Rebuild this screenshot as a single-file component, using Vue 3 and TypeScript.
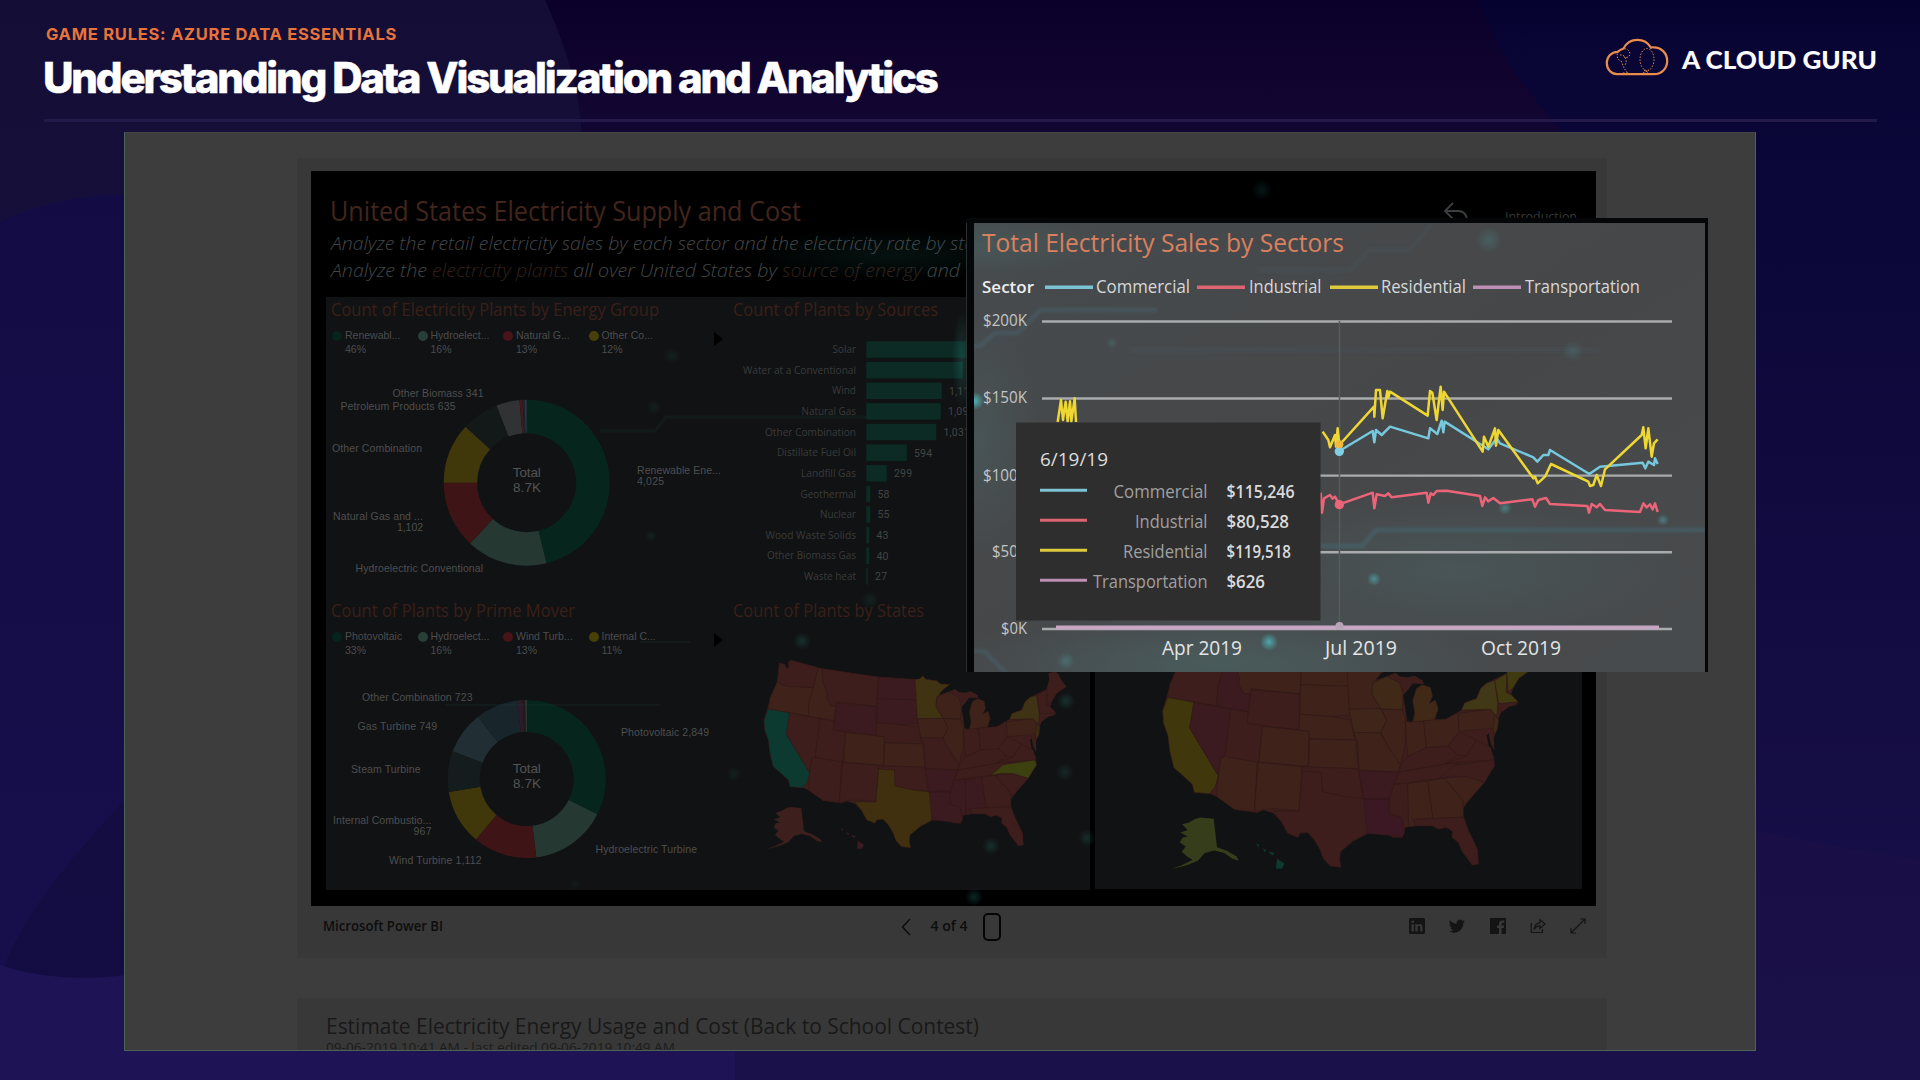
<script setup lang="ts">
type Anchor = 'start' | 'middle' | 'end'
interface Label { t: string; x: number; y: number; w: number; a?: Anchor }
interface Slice { from: number; to: number; fill: string }
interface LegendItem { name: string; pct: string; color: string }
interface State { id: string; d: string; count: string; price: string }

// Donut segment between two clockwise angles measured from 12 o'clock
function arc(cx: number, cy: number, R: number, r: number, s: Slice): string {
  const p = (rad: number, deg: number) => {
    const a = (deg * Math.PI) / 180
    return `${(cx + rad * Math.sin(a)).toFixed(2)},${(cy - rad * Math.cos(a)).toFixed(2)}`
  }
  const big = s.to - s.from > 180 ? 1 : 0
  return `M${p(R, s.from)}A${R},${R} 0 ${big} 1 ${p(R, s.to)}L${p(r, s.to)}A${r},${r} 0 ${big} 0 ${p(r, s.from)}Z`
}

const legendA: LegendItem[] = [
  { name: 'Renewabl...', pct: '46%', color: '#06241b' },
  { name: 'Hydroelect...', pct: '16%', color: '#283f38' },
  { name: 'Natural G...', pct: '13%', color: '#461419' },
  { name: 'Other Co...', pct: '12%', color: '#474008' },
]
const legendB: LegendItem[] = [
  { name: 'Photovoltaic', pct: '33%', color: '#06241b' },
  { name: 'Hydroelect...', pct: '16%', color: '#283f38' },
  { name: 'Wind Turb...', pct: '13%', color: '#461419' },
  { name: 'Internal C...', pct: '11%', color: '#474008' },
]

const donutA: Slice[] = [
  { from: 0, to: 166.2, fill: '#06261d' },
  { from: 166.2, to: 223, fill: '#263832' },
  { from: 223, to: 270, fill: '#3e1417' },
  { from: 270, to: 312.5, fill: '#40370b' },
  { from: 312.5, to: 338.6, fill: '#131819' },
  { from: 338.6, to: 355, fill: '#303233' },
  { from: 355, to: 357.2, fill: '#42191c' },
  { from: 357.2, to: 358.6, fill: '#1c2430' },
  { from: 358.6, to: 360, fill: '#28394a' },
]
const donutB: Slice[] = [
  { from: 0, to: 116.6, fill: '#06261d' },
  { from: 116.6, to: 173, fill: '#263832' },
  { from: 173, to: 220, fill: '#3e1417' },
  { from: 220, to: 260.5, fill: '#40370b' },
  { from: 260.5, to: 290.6, fill: '#151c1d' },
  { from: 290.6, to: 322, fill: '#212f35' },
  { from: 322, to: 353, fill: '#18252a' },
  { from: 353, to: 357, fill: '#2e1b2a' },
  { from: 357, to: 359, fill: '#231a1c' },
  { from: 359, to: 360, fill: '#35403f' },
]
const labelsA: Label[] = [
  { t: 'Other Biomass 341', x: 392.5, y: 397, w: 91 },
  { t: 'Petroleum Products 635', x: 340.5, y: 410, w: 115 },
  { t: 'Other Combination', x: 332, y: 452, w: 90 },
  { t: 'Renewable Ene...', x: 637, y: 474, w: 84 },
  { t: '4,025', x: 637, y: 485, w: 27 },
  { t: 'Natural Gas and ...', x: 333, y: 520, w: 90 },
  { t: '1,102', x: 397, y: 531, w: 26 },
  { t: 'Hydroelectric Conventional', x: 355.5, y: 572, w: 127.5 },
]
const labelsB: Label[] = [
  { t: 'Other Combination 723', x: 362, y: 701, w: 110.5 },
  { t: 'Gas Turbine 749', x: 357.5, y: 730, w: 79.5 },
  { t: 'Photovoltaic 2,849', x: 621, y: 736, w: 88 },
  { t: 'Steam Turbine', x: 351, y: 773, w: 69.5 },
  { t: 'Internal Combustio...', x: 333, y: 824, w: 98.5 },
  { t: '967', x: 413.5, y: 835, w: 18 },
  { t: 'Hydroelectric Turbine', x: 595.5, y: 853, w: 101.5 },
  { t: 'Wind Turbine 1,112', x: 389, y: 864, w: 92.5 },
]

const bars = [
  { n: 'Solar', v: '', w: 110, tw: 23.5 },
  { n: 'Water at a Conventional', v: '', w: 96.5, tw: 113 },
  { n: 'Wind', v: '1,115', w: 75.5, tw: 24 },
  { n: 'Natural Gas', v: '1,096', w: 74.5, tw: 54.5 },
  { n: 'Other Combination', v: '1,031', w: 70, tw: 91 },
  { n: 'Distillate Fuel Oil', v: '594', w: 40.5, tw: 79 },
  { n: 'Landfill Gas', v: '299', w: 20.5, tw: 55 },
  { n: 'Geothermal', v: '58', w: 4, tw: 55.5 },
  { n: 'Nuclear', v: '55', w: 4, tw: 36 },
  { n: 'Wood Waste Solids', v: '43', w: 3, tw: 90.5 },
  { n: 'Other Biomass Gas', v: '40', w: 3, tw: 89 },
  { n: 'Waste heat', v: '27', w: 1.6, tw: 52 },
]

const M = '#3b1b1f', R = '#3d1e1c', B = '#3f231b', O = '#402a17', Y = '#403315'
const outline =
  'M178,218L196,224L200,236L207,232L204,218L212,210L300,234L380,247L470,260L585,268L600,266L608,257L618,268L650,272L662,282L690,283L668,300L658,314L684,306L706,297L716,306L735,308L752,304L772,315L776,324L748,323L735,340L724,352L730,384L734,415L748,418L753,395L748,365L757,335L772,326L792,333L797,355L788,372L804,364L811,385L802,412L830,410L868,388L876,370L905,360L915,335L930,322L980,298L988,268L986,250L1005,245L1015,252L1025,272L1039,290L1010,310L998,330L990,350L1008,368L1003,376L985,380L965,395L955,420L957,434L948,455L949,488L940,470L935,445L930,450L936,480L948,502L950,524L925,565L890,605L872,630L872,645L885,682L908,730L910,765L895,768L870,735L860,712L845,700L846,685L830,676L812,680L796,672L755,672L730,676L722,700L700,700L690,695L640,690L600,710L570,735L568,756L572,773L545,770L528,752L520,730L505,705L490,688L470,690L465,700L440,690L425,662L405,641L380,633L365,640L310,632L265,600L248,593L210,590L205,570L178,545L160,530L150,490L145,450L134,420L132,390L145,345L150,325L172,275Z'

const states: State[] = [
  { id: 'WA', d: 'M178,218L196,224L200,236L207,232L204,218L212,210L296,233L280,293L210,290L188,286L172,275Z', count: R, price: M },
  { id: 'OR', d: 'M172,275L188,286L210,290L280,293L268,330L265,378L145,357L150,325Z', count: B, price: R },
  { id: 'CA', d: 'M145,357L209,369L199,432L269,548L262,575L248,593L210,590L205,570L178,545L160,530L150,490L145,450L134,420L132,390Z', count: '#0c3a30', price: '#40370d' },
  { id: 'NV', d: 'M209,369L300,386L285,502L276,505L268,548L199,432Z', count: R, price: M },
  { id: 'ID', d: 'M296,233L306,236L308,275L322,310L320,325L332,347L348,348L342,392L265,378L268,330L280,293Z', count: B, price: M },
  { id: 'MT', d: 'M306,236L380,247L475,261L470,348L350,336L348,348L332,347L320,325L322,310L308,275Z', count: R, price: B },
  { id: 'WY', d: 'M350,338L470,350L468,437L340,421Z', count: M, price: R },
  { id: 'UT', d: 'M300,386L342,392L340,421L378,426L368,517L285,504Z', count: R, price: R },
  { id: 'CO', d: 'M378,428L493,440L490,526L370,516Z', count: B, price: B },
  { id: 'AZ', d: 'M285,502L365,516L358,636L310,632L265,600L270,545L276,505Z', count: R, price: B },
  { id: 'NM', d: 'M368,516L476,527L468,634L398,629L380,633L358,637Z', count: R, price: B },
  { id: 'ND', d: 'M475,261L585,268L590,330L472,326Z', count: M, price: B },
  { id: 'SD', d: 'M472,326L590,330L592,400L545,404L470,398Z', count: M, price: B },
  { id: 'NE', d: 'M470,398L545,404L594,412L606,461L494,458L493,440L468,437Z', count: R, price: B },
  { id: 'KS', d: 'M494,459L608,462L614,532L492,527Z', count: B, price: B },
  { id: 'OK', d: 'M475,527L615,532L624,604L580,600L525,588L523,541L475,537Z', count: R, price: R },
  { id: 'TX', d: 'M476,537L523,541L525,588L580,600L628,606L637,652L636,690L600,710L570,735L568,756L572,773L545,770L528,752L520,730L505,705L490,688L470,690L465,700L440,690L425,662L405,636L468,636Z', count: '#40300f', price: R },
  { id: 'MN', d: 'M585,268L600,266L608,257L618,268L650,272L662,282L690,283L668,300L650,322L648,350L670,385L592,386Z', count: '#403312', price: B },
  { id: 'IA', d: 'M592,386L670,385L684,414L668,444L603,443Z', count: B, price: '#40261a' },
  { id: 'MO', d: 'M603,443L668,444L694,488L718,522L712,540L616,534L612,462Z', count: R, price: B },
  { id: 'AR', d: 'M615,536L712,540L692,604L628,606Z', count: M, price: '#3b1a20' },
  { id: 'LA', d: 'M628,606L690,606L690,642L720,650L728,688L722,700L690,695L636,690Z', count: M, price: '#3b1823' },
  { id: 'WI', d: 'M650,322L684,306L716,322L724,352L722,386L670,385L648,350Z', count: B, price: O },
  { id: 'IL', d: 'M672,386L722,388L730,410L730,470L718,522L694,488L670,444L684,414Z', count: B, price: B },
  { id: 'MI', d: 'M748,418L753,395L748,365L757,335L772,326L792,333L797,355L788,372L804,364L811,385L802,412Z', count: B, price: O },
  { id: 'IN', d: 'M730,418L775,415L782,480L736,502Z', count: R, price: B },
  { id: 'OH', d: 'M775,415L802,412L830,410L860,394L862,440L836,476L782,480Z', count: R, price: B },
  { id: 'KY', d: 'M718,522L736,502L782,480L836,476L858,498L830,520L716,540Z', count: R, price: R },
  { id: 'TN', d: 'M716,540L830,520L866,514L812,556L702,570Z', count: R, price: R },
  { id: 'MS', d: 'M702,570L736,568L738,674L726,676L720,650L690,642L692,604Z', count: M, price: R },
  { id: 'AL', d: 'M736,568L785,562L798,652L748,656L755,672L738,674Z', count: M, price: B },
  { id: 'GA', d: 'M785,562L826,555L872,610L873,650L798,654Z', count: R, price: B },
  { id: 'FL', d: 'M748,656L798,654L873,650L885,682L908,730L910,765L895,768L870,735L860,712L845,700L846,685L830,676L812,680L796,672L755,672Z', count: R, price: R },
  { id: 'SC', d: 'M826,555L880,551L925,565L890,605L874,620L872,610Z', count: R, price: B },
  { id: 'VA', d: 'M830,520L880,500L905,462L940,480L948,510L866,516Z', count: R, price: R },
  { id: 'NC', d: 'M812,556L850,524L945,510L950,524L925,565L880,551L845,550Z', count: '#3d400f', price: R },
  { id: 'WV', d: 'M836,476L862,440L905,462L880,500L858,498Z', count: R, price: R },
  { id: 'PA', d: 'M860,396L940,386L957,406L950,432L862,440Z', count: B, price: B },
  { id: 'NY', d: 'M868,388L876,370L905,360L915,335L930,322L950,316L958,372L955,404L940,386Z', count: Y, price: '#403816' },
  { id: 'NJ', d: 'M950,400L960,412L957,434L948,448L946,434Z', count: O, price: O },
  { id: 'VT', d: 'M950,316L980,298L978,345L990,350L1008,368L960,372Z', count: R, price: '#413a10' },
  { id: 'ME', d: 'M980,298L988,268L986,250L1005,245L1015,252L1025,272L1039,290L1010,310L998,330L984,345Z', count: R, price: '#403a10' },
]
const alaska =
  'M198,655L210,651L244,654L252,724L275,732L300,746L306,757L290,752L270,738L245,732L222,738L205,757L178,768L138,778L165,768L192,755L180,748L165,735L175,722L160,712L168,700L180,698L162,688L180,682L166,668L182,664Z'
const hawaii = 'M362,715L370,718L368,724ZM378,727L388,731L384,736ZM392,734L408,738L402,744ZM414,752L432,764L426,776L411,776Z'

// Sales series, in the plot's own 3x units
const residential =
  '68,665 85,690 90,712 105,675 108,710 113,655 118,705 222,590 223,620 228,540 240,540 248,625 262,543 265,562 270,545 383,617 390,543 397,548 410,630 422,530 428,600 432,545 548,725 552,680 565,710 585,655 588,707 595,660 700,805 705,800 713,820 735,800 753,762 865,815 870,828 880,825 890,795 903,828 915,778 1025,675 1030,652 1037,715 1045,655 1055,740 1062,700 1073,688'
const winter = '-727,636 -717,570 -711,630 -703,575 -697,634 -690,574 -686,634 -676,565 -672,636'
const commercial =
  '118,723 218,663 223,697 228,660 245,675 270,650 385,685 390,655 412,672 425,632 430,667 434,635 550,708 565,718 590,685 600,700 700,742 712,755 730,735 745,735 750,720 868,792 900,770 1028,758 1036,775 1045,755 1062,765 1065,745 1073,762'
const industrial =
  '62,848 66,908 72,865 90,855 98,866 105,860 118,883 218,848 223,895 230,853 255,858 265,850 275,862 380,848 385,878 392,850 400,855 410,843 440,842 540,858 547,888 555,862 565,874 580,864 600,880 697,868 705,890 715,870 738,864 750,882 862,888 867,908 875,882 890,892 900,882 915,900 1020,906 1030,880 1040,892 1050,883 1058,898 1065,880 1073,906'

const sectors = [
  { n: 'Commercial', c: '#7cc3d3', v: '$115,246', tw: 94, vw: 68, x: 1045, lx: 1096, lw: 94 },
  { n: 'Industrial', c: '#dd6571', v: '$80,528', tw: 72.5, vw: 62.5, x: 1197, lx: 1249, lw: 72.5 },
  { n: 'Residential', c: '#dfc93c', v: '$119,518', tw: 84.5, vw: 64.5, x: 1330, lx: 1381, lw: 85 },
  { n: 'Transportation', c: '#bd8fb4', v: '$626', tw: 114.5, vw: 38.5, x: 1473, lx: 1525, lw: 115 },
]
const gridY = [321.5, 398.5, 475.6, 552.3, 629]
const axis: Label[] = [
  { t: '$200K', x: 983, y: 326, w: 44 },
  { t: '$150K', x: 983, y: 403, w: 44 },
  { t: '$100K', x: 983, y: 480.5, w: 44 },
  { t: '$50K', x: 992, y: 557, w: 35 },
  { t: '$0K', x: 1001, y: 634, w: 26 },
]
const months: Label[] = [
  { t: 'Apr 2019', x: 1162, y: 655, w: 80 },
  { t: 'Jul 2019', x: 1325, y: 655, w: 72 },
  { t: 'Oct 2019', x: 1481, y: 655, w: 80 },
]
const sparks = [
  [802, 641, 6, 0.22], [1064, 632, 3, 0.1], [1066, 701, 6, 0.22], [1065, 772, 6, 0.16], [991, 846, 6, 0.22], [1087, 838, 6, 0.2],
  [734, 774, 5, 0.1], [974, 897, 6, 0.25], [651, 536, 4, 0.12], [575, 884, 4, 0.06], [672, 356, 6, 0.1], [654, 407, 5, 0.1], [870, 600, 6, 0.12], [1262, 190, 7, 0.15],
]
</script>

<template>
  <div class="slide">
    <svg class="backdrop" viewBox="0 0 1920 1080" aria-hidden="true">
      <defs>
        <linearGradient id="sky" x1="0" y1="0" x2="0" y2="1">
          <stop offset="0" stop-color="#0a0029" /><stop offset=".08" stop-color="#110530" />
          <stop offset=".3" stop-color="#150a3c" /><stop offset="1" stop-color="#1b114a" />
        </linearGradient>
        <linearGradient id="left" x1="0" y1="0" x2="0" y2="1">
          <stop offset="0" stop-color="#140e36" /><stop offset=".25" stop-color="#160f3b" /><stop offset="1" stop-color="#130c44" />
        </linearGradient>
        <linearGradient id="right" x1="0" y1="0" x2="0" y2="1080" gradientUnits="userSpaceOnUse">
          <stop offset="0" stop-color="#06022f" /><stop offset=".06" stop-color="#090535" /><stop offset=".2" stop-color="#0b0738" />
          <stop offset=".45" stop-color="#110a3f" /><stop offset=".8" stop-color="#160e46" />
        </linearGradient>
        <linearGradient id="low" x1="0" y1="0" x2="0" y2="1">
          <stop offset="0" stop-color="#130c44" /><stop offset="1" stop-color="#170f4c" />
        </linearGradient>
      </defs>
      <rect width="1920" height="1080" fill="url(#sky)" />
      <path d="M0,0H545C565,45 580,90 582,140V1080H0Z" fill="url(#left)" />
      <path d="M1478,0C1500,60 1530,95 1570,140C1620,190 1700,230 1750,250V830C1800,840 1850,850 1920,860V0Z" fill="url(#right)" />
      <path d="M0,222C40,202 80,196 124,194V800C80,850 30,900 0,975Z" fill="url(#low)" />
      <path d="M0,965C60,985 130,980 200,960H735V1080H0Z" fill="#1e1455" />
    </svg>

    <header class="top">
      <div class="titles">
        <p class="eyebrow">GAME RULES: AZURE DATA ESSENTIALS</p>
        <h1>Understanding Data Visualization and Analytics</h1>
      </div>
      <div class="brand">
        <svg width="64" height="38" viewBox="0 0 64 38" fill="none" stroke="#ea8d4c">
          <path d="M12,36.200H49C57,36.200 62.200,30 62.200,23C62.200,15 56,9.200 48.500,9.300C47,9.200 46.500,9.200 46,9.600C43,4.500 38,1.800 32.500,1.800C26,1.800 21,5.500 18.500,10.500C16.500,11 14,12.500 12.800,13.800C6,14 1.800,19 1.800,25C1.800,31.500 6.500,36.200 12,36.200Z" stroke-width="2.200" />
          <g stroke-width="1" stroke-dasharray="1.500 1.500">
            <ellipse cx="42" cy="21.500" rx="7" ry="11" />
            <path d="M14,13C10,18 13,22 17,24C18,29 20,32 23,35M17,12C20,9 25,12 25,16C24,20 21,20 19,19M15,17C20,16 23,23 20,27M38,35L44,32M39,32L44,35M18,35H24" />
          </g>
        </svg>
        <svg class="wordmark" width="196" height="30" viewBox="0 0 196 30"><text x="1" y="23.500" textLength="195" lengthAdjust="spacingAndGlyphs">A CLOUD GURU</text></svg>
      </div>
    </header>
    <div class="rule"></div>

    <main class="page">
      <section class="card">
        <div class="report">
          <div class="report-head">
            <svg width="1285" height="126" viewBox="311 171 1285 126">
              <text class="ttl" x="330" y="221" font-size="27.500" textLength="471" lengthAdjust="spacingAndGlyphs">United States Electricity Supply and Cost</text>
              <text class="sub" x="331" y="250" textLength="660" lengthAdjust="spacingAndGlyphs">Analyze the retail electricity sales by each sector and the electricity rate by state</text>
              <text class="sub" x="331" y="276.500" textLength="629" lengthAdjust="spacingAndGlyphs">Analyze the <tspan class="hl">electricity plants</tspan> all over United States by <tspan class="hl">source of energy</tspan> and</text>
              <path d="M1453,203L1445,211L1453,219M1445,211H1458C1463,211 1466,214 1467,219" fill="none" stroke="#3c4040" stroke-width="1.800" />
              <text class="intro" x="1505" y="221" textLength="72" lengthAdjust="spacingAndGlyphs">Introduction</text>
            </svg>
          </div>

          <div class="panels">
            <div class="panel wide">
              <div class="col">
                <div class="cell upper">
                  <svg class="head" width="390" height="26" viewBox="326 297 390 26"><text class="ttl dim" x="331" y="316" textLength="328" lengthAdjust="spacingAndGlyphs">Count of Electricity Plants by Energy Group</text></svg>
                  <ul class="legend">
                    <li v-for="l in legendA" :key="l.name"><i :style="{ background: l.color }"></i><span>{{ l.name }}<br />{{ l.pct }}</span></li>
                    <li class="next"></li>
                  </ul>
                  <svg width="400" height="236" viewBox="326 362 400 236">
                    <path v-for="s in donutA" :key="s.from" :d="arc(526.7, 482.7, 83, 49.5, s)" :fill="s.fill" />
                    <text v-for="l in labelsA" :key="l.t" class="lab" :x="l.x" :y="l.y" :textLength="l.w">{{ l.t }}</text>
                    <text class="mid" x="512.800" y="477" textLength="28">Total</text><text class="mid" x="513" y="492" textLength="28">8.7K</text>
                  </svg>
                </div>
                <div class="cell">
                  <svg class="head" width="390" height="26" viewBox="326 598 390 26"><text class="ttl dim" x="331" y="617" textLength="244" lengthAdjust="spacingAndGlyphs">Count of Plants by Prime Mover</text></svg>
                  <ul class="legend">
                    <li v-for="l in legendB" :key="l.name"><i :style="{ background: l.color }"></i><span>{{ l.name }}<br />{{ l.pct }}</span></li>
                    <li class="next"></li>
                  </ul>
                  <svg width="400" height="227" viewBox="326 663 400 227">
                    <path v-for="s in donutB" :key="s.from" :d="arc(526.7, 779, 79, 47, s)" :fill="s.fill" />
                    <text v-for="l in labelsB" :key="l.t" class="lab" :x="l.x" :y="l.y" :textLength="l.w">{{ l.t }}</text>
                    <text class="mid" x="512.800" y="773" textLength="28">Total</text><text class="mid" x="513" y="788" textLength="28">8.7K</text>
                  </svg>
                </div>
              </div>
              <div class="col">
                <div class="cell upper">
                  <svg class="head" width="364" height="26" viewBox="726 297 364 26"><text class="ttl dim" x="733" y="316" textLength="205" lengthAdjust="spacingAndGlyphs">Count of Plants by Sources</text></svg>
                  <svg width="364" height="275" viewBox="726 323 364 275">
                    <g v-for="(b, i) in bars" :key="b.n">
                      <text class="lab din" x="856" :y="353.2 + i * 20.62" text-anchor="end" :textLength="b.tw" lengthAdjust="spacingAndGlyphs">{{ b.n }}</text>
                      <rect x="866.300" :y="341.3 + i * 20.62" :width="b.w" height="16.500" fill="#0b2b24" />
                      <text class="lab val" :x="873.5 + b.w" :y="353.4 + i * 20.62">{{ b.v }}</text>
                    </g>
                  </svg>
                </div>
                <div class="cell">
                  <svg class="head" width="364" height="26" viewBox="726 598 364 26"><text class="ttl dim" x="733" y="617" textLength="191" lengthAdjust="spacingAndGlyphs">Count of Plants by States</text></svg>
                  <svg width="364" height="266" viewBox="726 624 364 266">
                    <g transform="translate(720 590) scale(.33333)" stroke="#2f1917" stroke-width="1.500">
                      <path :d="outline" fill="#3d1e1c" stroke="none" />
                      <path v-for="s in states" :key="s.id" :d="s.d" :fill="s.count" />
                      <path :d="alaska" fill="#3d1f1d" stroke="none" /><path :d="hawaii" fill="#3b1b22" stroke="none" />
                    </g>
                  </svg>
                </div>
              </div>
            </div>
            <div class="panel narrow">
              <svg width="487" height="592" viewBox="1095 297 487 592">
                <g transform="translate(1109 551.600) scale(.406 .4083)" stroke="#2f1917" stroke-width="1.500">
                  <path :d="outline" fill="#3d1e1c" stroke="none" />
                  <path v-for="s in states" :key="s.id" :d="s.d" :fill="s.price" />
                  <path :d="alaska" transform="translate(14 0)" fill="#363d1b" stroke="none" /><path :d="hawaii" fill="#0e3a33" stroke="none" />
                </g>
              </svg>
            </div>
          </div>

          <svg class="glow" viewBox="311 171 1285 735" aria-hidden="true">
            <defs><radialGradient id="sp"><stop offset="0" stop-color="#2c9a90" /><stop offset="1" stop-color="#2c9a90" stop-opacity="0" /></radialGradient></defs>
            <circle v-for="(s, i) in sparks" :key="i" :cx="s[0]" :cy="s[1]" :r="s[2] * 1.5" :opacity="s[3]" fill="url(#sp)" />
            <ellipse cx="890" cy="255" rx="150" ry="26" fill="url(#sp)" opacity=".12" />
            <ellipse cx="962" cy="360" rx="10" ry="50" fill="url(#sp)" opacity=".25" />
            <path d="M600,431H655L666,417H870" stroke="#1a3a3d" stroke-width="3" fill="none" opacity=".2" />
            <path d="M445,705H660M640,642H690" stroke="#1d3a3a" stroke-width="2" fill="none" opacity=".2" />
          </svg>
        </div>

        <footer class="bar">
          <svg class="ms" width="122" height="20" viewBox="0 0 122 20"><text x="1" y="14" textLength="120" lengthAdjust="spacingAndGlyphs">Microsoft Power BI</text></svg>
          <div class="pager">
            <svg width="10" height="18" viewBox="0 0 10 18"><path d="M9,1L1.500,9L9,17" fill="none" stroke="#0d0d0d" stroke-width="1.500" /></svg>
            <svg class="ms" width="38" height="20" viewBox="0 0 38 20"><text x="0.500" y="14" textLength="37" lengthAdjust="spacingAndGlyphs">4 of 4</text></svg>
            <span class="focus"></span>
          </div>
          <div class="share">
            <svg width="16" height="16" viewBox="0 0 16 16"><path fill-rule="evenodd" d="M1,0H15L16,1V15L15,16H1L0,15V1ZM2.500,6.200V13.500H4.800V6.200ZM3.600,2.500A1.300,1.300 0 1 0 3.700,5.100A1.300,1.300 0 1 0 3.600,2.500ZM6.300,6.200V13.500H8.600V9.500C8.700,7.600 11.200,7.500 11.200,9.500V13.500H13.500V9C13.500,5.800 10,5.200 8.600,7.200V6.200Z" fill="#141414" /></svg>
            <svg width="16" height="16" viewBox="0 0 24 24"><path d="M23.600,4.900c-.9.400-1.800.7-2.800.8 1-.6 1.800-1.600 2.200-2.700-1,.6-2,1-3.100,1.200A4.900,4.900 0 0 0 11.500,8.700C7.500,8.500 3.800,6.500 1.400,3.500c-1.300,2.200-.7,5.200 1.500,6.600-.8,0-1.600-.2-2.200-.6 0,2.300 1.600,4.400 3.900,4.900-.7.200-1.500.2-2.200.1.600,2 2.400,3.400 4.600,3.400A9.900,9.900 0 0 1 0,19.900c2.200,1.400 4.800,2.200 7.500,2.200 9.100,0 14.300-7.700 14-14.600 1-.7 1.800-1.600 2.100-2.600z" fill="#141414" /></svg>
            <svg width="16" height="16" viewBox="0 0 16 16"><path d="M0,0H16V16H11.600V10H13.800L14.200,7.500H11.600V6C11.600,5 12,4.700 13,4.700H14.300V2.400H12.200C10,2.400 9,3.800 9,5.700V7.500H7V10H9V16H0Z" fill="#141414" /></svg>
            <svg width="16" height="16" viewBox="0 0 16 16" fill="none" stroke="#141414" stroke-width="1.200"><path d="M1.200,5V14.500H12.500V11" /><path d="M4,11.500C4.500,7.500 6.500,5 10,4.800V1.500L15,6L10,10.500V7.800C7.500,7.700 5.500,9 4,11.500Z" /></svg>
            <svg width="16" height="16" viewBox="0 0 16 16" fill="none" stroke="#141414" stroke-width="1.200"><path d="M1,15L15,1M10,1H15V6M1,10V15H6" /></svg>
          </div>
        </footer>
      </section>

      <section class="card second">
        <svg width="1310" height="53" viewBox="297 998 1310 53">
          <text class="est" x="326" y="1033.500" textLength="653" lengthAdjust="spacingAndGlyphs">Estimate Electricity Energy Usage and Cost (Back to School Contest)</text>
          <text class="edited" x="326" y="1052" textLength="349" lengthAdjust="spacingAndGlyphs">09-06-2019 10:41 AM - last edited 09-06-2019 10:49 AM</text>
        </svg>
      </section>

      <aside class="callout">
        <svg width="742" height="454" viewBox="966 218 742 454">
          <defs>
            <linearGradient id="pane" x1="0" y1="0" x2="1" y2="1"><stop offset="0" stop-color="#464b4d" /><stop offset=".5" stop-color="#464749" /><stop offset="1" stop-color="#484b4d" /></linearGradient>
            <radialGradient id="teal"><stop offset="0" stop-color="#4f7f7e" stop-opacity=".5" /><stop offset="1" stop-color="#4f7f7e" stop-opacity="0" /></radialGradient>
            <radialGradient id="dot"><stop offset="0" stop-color="#4fb0b4" /><stop offset="1" stop-color="#4fb0b4" stop-opacity="0" /></radialGradient>
            <filter id="soft"><feGaussianBlur stdDeviation="1.500" /></filter>
            <clipPath id="paneClip"><rect x="974" y="223" width="731" height="449" /></clipPath>
          </defs>
          <rect x="966" y="218" width="742" height="454" fill="#050607" />
          <rect x="965" y="223" width="2" height="449" fill="#2c3031" />
          <rect x="974" y="223" width="731" height="449" fill="url(#pane)" />
          <g clip-path="url(#paneClip)">
            <ellipse cx="1450" cy="570" rx="240" ry="75" fill="url(#teal)" opacity=".45" />
            <ellipse cx="1220" cy="665" rx="280" ry="60" fill="url(#teal)" opacity=".7" />
            <ellipse cx="980" cy="440" rx="60" ry="120" fill="url(#teal)" opacity=".4" />
            <ellipse cx="980" cy="245" rx="130" ry="30" fill="url(#teal)" opacity=".45" />
            <g fill="none" stroke="#4a6572" stroke-width="4" opacity=".5" filter="url(#soft)">
              <path d="M970,346H980L995,333H1018L1040,310H1157" />
              <path d="M1320,546H1362L1376,530H1705" stroke="#43707c" />
              <path d="M974,651H984L1006,673" /><path d="M1258,270H1350L1370,250H1410L1432,224M1130,350H1600" opacity=".3" />
            </g>
            <circle cx="1269" cy="642" r="9" fill="url(#dot)" opacity=".9" /><circle cx="975" cy="401" r="9" fill="url(#dot)" />
            <circle cx="1374" cy="579" r="7" fill="url(#dot)" opacity=".65" /><circle cx="1505" cy="508" r="7" fill="url(#dot)" opacity=".5" />
            <circle cx="1663" cy="520" r="6" fill="url(#dot)" opacity=".5" /><circle cx="1066" cy="661" r="9" fill="url(#dot)" opacity=".3" />
            <circle cx="1489" cy="240" r="13" fill="url(#dot)" opacity=".22" /><circle cx="1573" cy="351" r="11" fill="url(#dot)" opacity=".18" />
            <circle cx="1112" cy="343" r="6" fill="url(#dot)" opacity=".2" />
          </g>

          <text x="982" y="251.500" class="sales" textLength="362" lengthAdjust="spacingAndGlyphs">Total Electricity Sales by Sectors</text>
          <text x="982" y="293" class="sector" textLength="52" lengthAdjust="spacingAndGlyphs">Sector</text>
          <g v-for="s in sectors" :key="s.n">
            <path :d="`M${s.x},287.300h48`" :stroke="s.c" stroke-width="3.500" />
            <text class="leg" :x="s.lx" y="293.300" :textLength="s.lw" lengthAdjust="spacingAndGlyphs">{{ s.n }}</text>
          </g>
          <text v-for="l in axis" :key="l.t" class="ax" :x="l.x" :y="l.y" :textLength="l.w" lengthAdjust="spacingAndGlyphs">{{ l.t }}</text>
          <path v-for="y in gridY" :key="y" :d="`M1042,${y}H1672`" stroke="#a9abac" stroke-width="2.400" />
          <path d="M1339.500,321V629" stroke="#585b5e" stroke-width="1.500" />
          <path d="M1056,627.500H1659" stroke="#c7a6c3" stroke-width="4" />
          <circle cx="1339.500" cy="626" r="4" fill="#b9a3b8" />
          <g transform="translate(1300 210) scale(.33333)" fill="none" stroke-width="7.500" stroke-linejoin="round">
            <polyline :points="industrial" stroke="#ec6478" />
            <polyline :points="commercial" stroke="#76c9dc" />
            <polyline :points="residential" stroke="#efd733" />
            <polyline :points="winter" stroke="#efd733" />
            <circle cx="118" cy="724" r="14" fill="#7fd0e4" /><circle cx="118" cy="884" r="14" fill="#ec6478" />
            <circle cx="118" cy="703" r="12" fill="#f2b93c" />
          </g>
          <text v-for="l in months" :key="l.t" class="mon" :x="l.x" :y="l.y" :textLength="l.w" lengthAdjust="spacingAndGlyphs">{{ l.t }}</text>

          <rect x="1016" y="422.500" width="304.500" height="198" fill="#2e2e2e" />
          <text class="date" x="1040" y="466" textLength="68" lengthAdjust="spacingAndGlyphs">6/19/19</text>
          <g v-for="(s, i) in sectors" :key="s.v">
            <path :d="`M1040,${490.3 + i * 30}h47`" :stroke="s.c" stroke-width="3" />
            <text class="tipn" :x="1207.500 - s.tw" :y="497.500 + i * 30" :textLength="s.tw" lengthAdjust="spacingAndGlyphs">{{ s.n }}</text>
            <text class="tipv" x="1226.500" :y="497.500 + i * 30" :textLength="s.vw" lengthAdjust="spacingAndGlyphs">{{ s.v }}</text>
          </g>
        </svg>
      </aside>
    </main>
  </div>
</template>

<style>
body { margin: 0; background: #120933; }
</style>

<style scoped>
.slide { position: relative; width: 1920px; height: 1080px; overflow: hidden; display: flex; flex-direction: column; font-family: 'Open Sans', 'Noto Sans', sans-serif; }
.slide svg { display: block; flex: none; }
.backdrop { position: absolute; inset: 0; z-index: 0; }
.top { position: relative; height: 119px; padding: 0 43px 0 44px; display: flex; justify-content: space-between; box-sizing: border-box; font-family: Inter, sans-serif; }
.titles { padding-top: 22px; }
.eyebrow { margin: 0 0 0 2px; font-size: 16.5px; line-height: 24px; font-weight: 700; letter-spacing: 0.75px; color: #e8743b; white-space: nowrap; }
h1 { margin: 6px 0 0 -1px; font-size: 42px; line-height: 52px; font-weight: 800; letter-spacing: -2.2px; color: #fff; -webkit-text-stroke: 0.5px #fff; white-space: nowrap; }
.brand { display: flex; align-items: flex-start; gap: 12px; padding-top: 38px; }
.wordmark { margin-top: 7px; }
.wordmark text { font: 900 25px Lato, sans-serif; fill: #fbfaff; }
.rule { position: relative; flex: none; height: 3px; margin: 0 43px 0 44px; background: #231a4a; }
.page { position: relative; flex: none; width: 1632px; height: 919px; margin: 10px 0 0 124px; box-sizing: border-box; background: #3d3d3d; border: 1px solid #4c6358; border-top-color: #454545; padding: 25px 0 0 172px; overflow: hidden; }
.card { width: 1310px; height: 800px; box-sizing: border-box; padding: 13px 0 0 14px; background: #383838; }
.second { height: 60px; margin-top: 40px; padding: 0; }
.report { position: relative; width: 1285px; height: 735px; background: #000; display: flex; flex-direction: column; }
.panels { display: flex; gap: 5px; padding-left: 15px; }
.panel { background: #111213; overflow: hidden; }
.wide { display: flex; width: 764px; height: 593px; }
.narrow { width: 487px; height: 592px; }
.col:first-child { width: 400px; }
.upper { height: 301px; }
.ttl { font-family: 'Open Sans', sans-serif; fill: #42251c; }
.dim { font-size: 18px; fill: #3a201a; }
.sub { font: italic 300 19px 'Open Sans', sans-serif; fill: #434748; }
.hl { fill: #33211c; }
.intro { font-size: 13px; fill: #34393a; }
.legend { display: flex; list-style: none; margin: 0; padding: 5px 0 0 6px; height: 39px; box-sizing: border-box; font: 10.5px/14px 'Liberation Sans', sans-serif; color: #4b4d4e; }
.legend li { display: flex; width: 85.500px; white-space: nowrap; }
.legend i { width: 10px; height: 10px; border-radius: 50%; margin: 3px 3px 0 0; }
.legend .next { width: 0; height: 0; margin: 4px 0 0 40px; border-left: 9px solid #000; border-top: 7px solid transparent; border-bottom: 7px solid transparent; }
.lab { font: 10.5px 'Liberation Sans', sans-serif; fill: #4d4f50; }
.din { font: 10.8px 'Open Sans', sans-serif; fill: #393c3c; }
.val { font: 10.5px Roboto, sans-serif; fill: #424545; letter-spacing: 0.2px; }
.mid { font: 13.5px 'Liberation Sans', sans-serif; fill: #525455; }
.glow { position: absolute; inset: 0; }
.bar { display: grid; grid-template-columns: 579px 1fr auto; align-items: center; height: 41px; padding: 0 21px 0 11px; }
.ms text { font: 600 13.5px 'Open Sans', sans-serif; fill: #0d0d0d; }
.pager { display: flex; align-items: center; }
.pager .ms { margin: 0 15px 0 19px; }
.focus { width: 14px; height: 24px; border: 2px solid #050505; border-radius: 5px; }
.share { display: flex; gap: 24.200px; }
.share svg { position: relative; top: -1px; }
.est { font: 22px 'Open Sans', sans-serif; fill: #191919; }
.edited { font: 13px 'Open Sans', sans-serif; fill: #1c1c1c; }
.callout { position: absolute; left: 841px; top: 85px; }
.callout text { font-family: 'Open Sans', sans-serif; fill: #d7d8d9; }
.callout .sales { font-size: 25.500px; fill: #d9805f; }
.callout .sector { font-size: 17px; font-weight: 600; fill: #eeeeee; }
.callout .leg { font-size: 17.800px; }
.callout .ax { font-size: 16.500px; fill: #c3c5c6; }
.callout .mon { font-size: 19.800px; fill: #e4e5e6; }
.callout .date { font-size: 18px; fill: #dddddd; }
.callout .tipn { font-size: 17.800px; fill: #a0a0a0; }
.callout .tipv { font-size: 17.800px; font-weight: 600; fill: #dadada; }
</style>
